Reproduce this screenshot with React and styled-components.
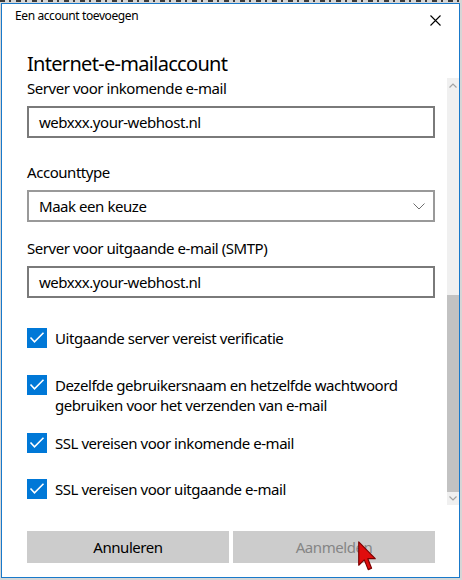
import React from 'react'
import styled, { createGlobalStyle } from 'styled-components'

const GlobalStyle = createGlobalStyle`
  html, body {
    margin: 0;
    padding: 0;
    background: #d6d6d6;
  }
  body {
    font-family: 'Noto Sans', 'Liberation Sans', sans-serif;
    color: #000;
  }
`

const Screen = styled.div`
  position: relative;
  width: 462px;
  height: 580px;
  padding: 3px 2px 2px 1px;
  box-sizing: border-box;
  background:
    repeating-linear-gradient(90deg, #3a3a3a 0 5px, #d6d6d6 5px 9px, #3a3a3a 9px 11px, #d6d6d6 11px 16px) top left / 100% 2px no-repeat,
    #d6d6d6;
`

const Window = styled.div`
  height: 100%;
  box-sizing: border-box;
  border: 1px solid #1979ca;
  background: #fff;
  display: flex;
  flex-direction: column;
`

const TitleBar = styled.div`
  height: 30px;
  flex: none;
  display: flex;
  justify-content: space-between;
  align-items: flex-start;
  padding: 4px 0 0 13px;
  box-sizing: border-box;
`

const Title = styled.span`
  font-size: 12px;
  line-height: 16px;
  letter-spacing: -0.4px;
`

const CloseButton = styled.svg`
  width: 11px;
  height: 11px;
  margin: 7px 18px 0 0;
`

const Heading = styled.h1`
  margin: 16px 0 0 25px;
  font-size: 20px;
  line-height: 28px;
  font-weight: 400;
  letter-spacing: -0.7px;
`

const ScrollArea = styled.div`
  height: 427px;
  flex: none;
  display: flex;
`

const ScrollContent = styled.div`
  flex: 1;
  padding: 0 12px 0 25px;
  display: flex;
  flex-direction: column;
  font-size: 15px;
  letter-spacing: -0.45px;
`

const Label = styled.label`
  display: block;
  line-height: 20px;
  margin-top: ${({ $space }) => $space || 0}px;
  margin-bottom: 8px;
`

const Field = styled.div`
  height: 32px;
  box-sizing: border-box;
  border: 2px solid ${({ $select }) => ($select ? '#999' : '#7a7a7a')};
  display: flex;
  align-items: center;
  justify-content: space-between;
  padding: 0 8px 0 10px;
`

const Chevron = styled.svg`
  width: 12px;
  height: 7px;
`

const CheckRow = styled.div`
  display: flex;
  align-items: flex-start;
  gap: 8px;
  margin-top: ${({ $space }) => $space}px;
`

const Box = styled.span`
  width: 20px;
  height: 20px;
  flex: none;
  background: #0078d7;
  display: flex;
  align-items: center;
  justify-content: center;
`

const CheckText = styled.span`
  line-height: 20px;
`

const Scrollbar = styled.div`
  width: 12px;
  flex: none;
  background: #f0f0f0;
  display: flex;
  flex-direction: column;
  align-items: stretch;
`

const ScrollArrow = styled.div`
  height: ${({ $h }) => $h}px;
  display: flex;
  align-items: center;
  justify-content: center;
`

const ScrollTrack = styled.div`
  flex: 1;
`

const ScrollThumb = styled.div`
  height: 197px;
  background: #c2c2c2;
`

const Footer = styled.div`
  display: grid;
  grid-template-columns: 1fr 1fr;
  gap: 4px;
  padding: 26px 24px 0 25px;
`

const Button = styled.div`
  height: 32px;
  background: #cccccc;
  display: flex;
  align-items: center;
  justify-content: center;
  font-size: 15px;
  letter-spacing: -0.45px;
  color: ${({ $disabled }) => ($disabled ? '#858585' : '#000')};
`

const Cursor = styled.svg`
  position: absolute;
  left: 358px;
  top: 541px;
  width: 19px;
  height: 31px;
`

const Check = () => (
  <Box>
    <svg width='20' height='20' viewBox='0 0 20 20'>
      <polyline points='3.5,9.5 7.5,13.8 16.5,4.8' fill='none' stroke='#fff' strokeWidth='1.6' />
    </svg>
  </Box>
)

const Arrow = ({ up }) => (
  <svg width='8' height='5' viewBox='0 0 8 5'>
    <polyline
      points={up ? '0.5,4.5 4,1 7.5,4.5' : '0.5,0.5 4,4 7.5,0.5'}
      fill='none'
      stroke='#a3a3a3'
      strokeWidth='1.2'
    />
  </svg>
)

const OPTIONS = [
  { text: 'Uitgaande server vereist verificatie', space: 30 },
  { text: 'Dezelfde gebruikersnaam en hetzelfde wachtwoord gebruiken voor het verzenden van e-mail', space: 27 },
  { text: 'SSL vereisen voor inkomende e-mail', space: 18 },
  { text: 'SSL vereisen voor uitgaande e-mail', space: 26 }
]

function App () {
  return (
    <>
      <GlobalStyle />
      <Screen>
        <Window>
          <TitleBar>
            <Title>Een account toevoegen</Title>
            <CloseButton viewBox='0 0 11 11'>
              <path d='M0.5 0.5 L10.5 10.5 M10.5 0.5 L0.5 10.5' stroke='#000' strokeWidth='1.1' />
            </CloseButton>
          </TitleBar>
          <Heading>Internet-e-mailaccount</Heading>
          <ScrollArea>
            <ScrollContent>
              <Label>Server voor inkomende e-mail</Label>
              <Field>webxxx.your-webhost.nl</Field>
              <Label $space={24}>Accounttype</Label>
              <Field $select>
                Maak een keuze
                <Chevron viewBox='0 0 12 7'>
                  <polyline points='0.5,0.5 6,6 11.5,0.5' fill='none' stroke='#6e6e6e' strokeWidth='1' />
                </Chevron>
              </Field>
              <Label $space={16}>Server voor uitgaande e-mail (SMTP)</Label>
              <Field>webxxx.your-webhost.nl</Field>
              {OPTIONS.map(item => (
                <CheckRow key={item.text} $space={item.space}>
                  <Check />
                  <CheckText>{item.text}</CheckText>
                </CheckRow>
              ))}
            </ScrollContent>
            <Scrollbar>
              <ScrollArrow $h={14}><Arrow up /></ScrollArrow>
              <ScrollTrack />
              <ScrollThumb />
              <ScrollArrow $h={13}><Arrow /></ScrollArrow>
            </Scrollbar>
          </ScrollArea>
          <Footer>
            <Button>Annuleren</Button>
            <Button $disabled>Aanmelden</Button>
          </Footer>
        </Window>
        <Cursor viewBox='0 0 13 21'>
          <path d='M0.5 0.5 L0.5 16.5 L4.3 12.8 L7 19.5 L9.3 18.5 L6.7 12 L11.8 12 Z' fill='#e00d0d' stroke='#7a0000' strokeWidth='0.8' strokeLinejoin='round' />
        </Cursor>
      </Screen>
    </>
  )
}

export default App
